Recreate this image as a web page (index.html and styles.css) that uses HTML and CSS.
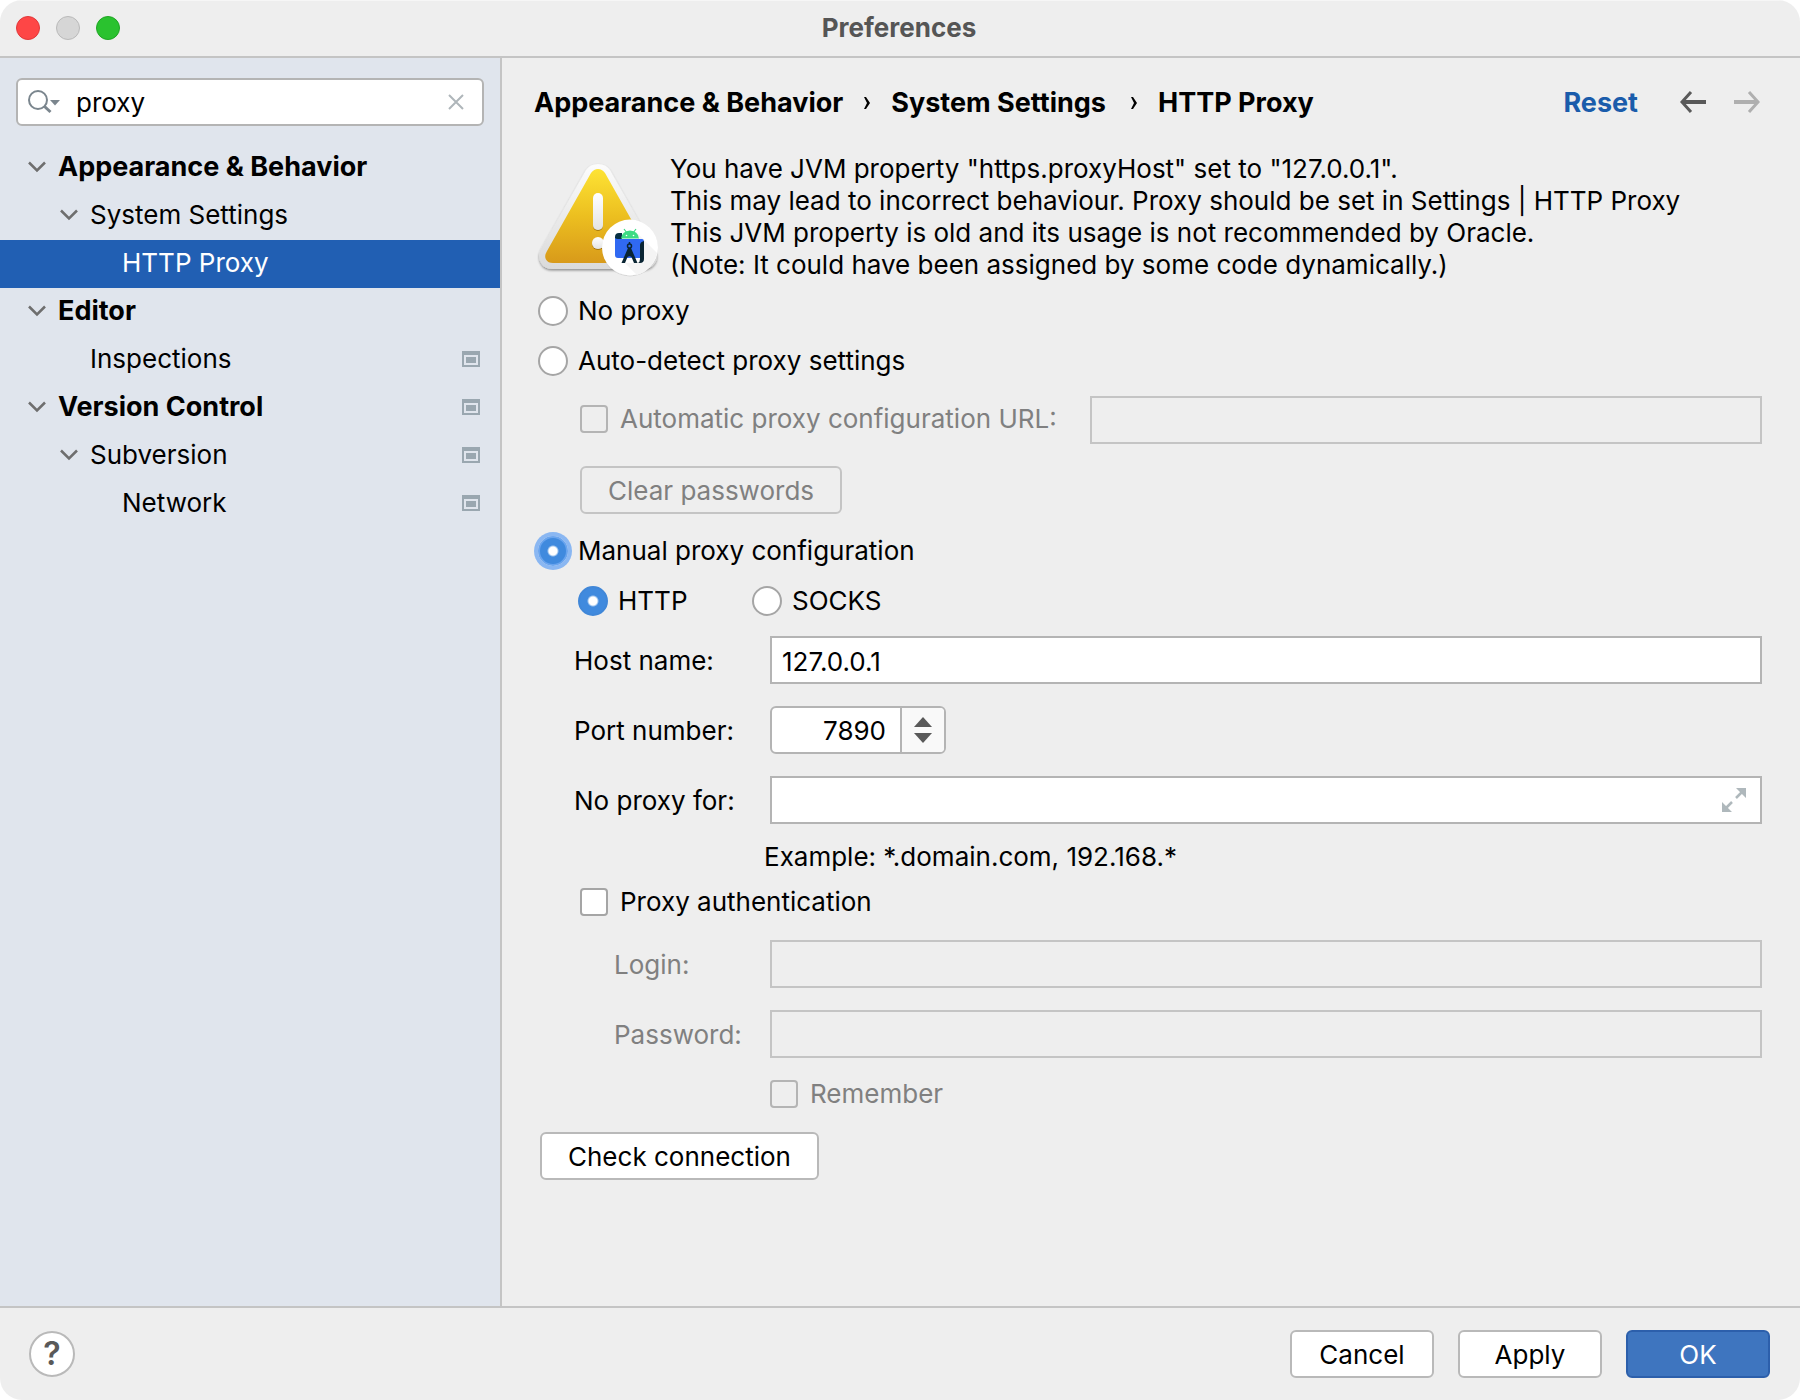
FILE: index.html
```html
<!DOCTYPE html>
<html lang="en">
<head>
<meta charset="utf-8">
<title>Preferences</title>
<link rel="stylesheet" href="styles.css">
</head>
<body>
<div class="window">
  <header class="titlebar">
    <div class="lights">
      <button class="light light-close" aria-label="Close"></button>
      <button class="light light-min" aria-label="Minimize" disabled></button>
      <button class="light light-zoom" aria-label="Zoom"></button>
    </div>
    <h1 class="title">Preferences</h1>
  </header>

  <div class="body">
    <nav class="sidebar">
      <div class="search">
        <svg class="search-icon" width="34" height="26" viewBox="0 0 34 26" fill="none">
          <circle cx="10" cy="11" r="9" stroke="#7b868e" stroke-width="2"/>
          <path d="M16 17l6.500 6" stroke="#7b868e" stroke-width="3"/>
          <path d="M22 11h10l-5 5.500z" fill="#7b868e"/>
        </svg>
        <input class="search-input" type="text" value="proxy" aria-label="Search settings">
        <button class="clear" aria-label="Clear search">
          <svg width="16" height="16" viewBox="0 0 16 16"><path d="M1 1l14 14M15 1L1 15" stroke="#afb6ba" stroke-width="2"/></svg>
        </button>
      </div>
      <ul class="tree">
        <li class="node level-1"><svg class="chevron" width="18" height="12" viewBox="0 0 18 12"><path d="M1 1.500l8 8 8-8"/></svg><span class="label">Appearance &amp; Behavior</span></li>
        <li class="node level-2"><svg class="chevron" width="18" height="12" viewBox="0 0 18 12"><path d="M1 1.500l8 8 8-8"/></svg><span class="label">System Settings</span></li>
        <li class="node level-3 selected"><span class="label">HTTP Proxy</span></li>
        <li class="node level-1"><svg class="chevron" width="18" height="12" viewBox="0 0 18 12"><path d="M1 1.500l8 8 8-8"/></svg><span class="label">Editor</span></li>
        <li class="node level-2 leaf"><span class="label">Inspections</span><svg class="scope" width="18" height="16" viewBox="0 0 18 16"><path fill-rule="evenodd" d="M0 0h18v16H0zM2 4v10h14V4z"/><path d="M4 6h10v6H4z"/></svg></li>
        <li class="node level-1"><svg class="chevron" width="18" height="12" viewBox="0 0 18 12"><path d="M1 1.500l8 8 8-8"/></svg><span class="label">Version Control</span><svg class="scope" width="18" height="16" viewBox="0 0 18 16"><path fill-rule="evenodd" d="M0 0h18v16H0zM2 4v10h14V4z"/><path d="M4 6h10v6H4z"/></svg></li>
        <li class="node level-2"><svg class="chevron" width="18" height="12" viewBox="0 0 18 12"><path d="M1 1.500l8 8 8-8"/></svg><span class="label">Subversion</span><svg class="scope" width="18" height="16" viewBox="0 0 18 16"><path fill-rule="evenodd" d="M0 0h18v16H0zM2 4v10h14V4z"/><path d="M4 6h10v6H4z"/></svg></li>
        <li class="node level-3"><span class="label">Network</span><svg class="scope" width="18" height="16" viewBox="0 0 18 16"><path fill-rule="evenodd" d="M0 0h18v16H0zM2 4v10h14V4z"/><path d="M4 6h10v6H4z"/></svg></li>
      </ul>
    </nav>

    <main class="main">
      <div class="toolbar">
        <div class="crumbs">
          <span>Appearance &amp; Behavior</span>
          <svg width="6" height="12" viewBox="0 0 6 12"><path d="M0 0h2l4 6-4 6H0l3-6z"/></svg>
          <span>System Settings</span>
          <svg class="wide" width="6" height="12" viewBox="0 0 6 12"><path d="M0 0h2l4 6-4 6H0l3-6z"/></svg>
          <span>HTTP Proxy</span>
        </div>
        <a class="reset" href="#">Reset</a>
        <button class="nav-button" aria-label="Back">
          <svg width="26" height="22" viewBox="0 0 26 22" fill="none" stroke="#595959" stroke-width="4"><path d="M26 11H3"/><path stroke-width="3" d="M11 1L2 11l9 10"/></svg>
        </button>
        <button class="nav-button" aria-label="Forward" disabled>
          <svg width="26" height="22" viewBox="0 0 26 22" fill="none" stroke="#afafaf" stroke-width="4"><path d="M0 11h23"/><path stroke-width="3" d="M15 1l9 10-9 10"/></svg>
        </button>
      </div>

      <div class="alert">
        <svg class="alert-icon" width="132" height="128" viewBox="4 -2 132 128">
          <defs>
            <linearGradient id="amber" x1="0" y1="0" x2="0" y2="1"><stop offset="0" stop-color="#fde334"/><stop offset=".5" stop-color="#ecbf20"/><stop offset="1" stop-color="#d89a1a"/></linearGradient>
            <linearGradient id="rim" x1="0" y1="0" x2="0" y2="1"><stop offset="0" stop-color="#fcfcfc"/><stop offset="1" stop-color="#dadada"/></linearGradient>
            <linearGradient id="mark" x1="0" y1="0" x2="0" y2="1"><stop offset="0" stop-color="#fff"/><stop offset="1" stop-color="#e4e4e2"/></linearGradient>
            <filter id="drop" x="-20%" y="-20%" width="140%" height="140%"><feDropShadow dx="0" dy="1.500" stdDeviation="1.200" flood-opacity=".4"/></filter>
            <filter id="faint" x="-20%" y="-20%" width="140%" height="140%"><feDropShadow dx="0" dy=".5" stdDeviation=".5" flood-opacity=".2"/></filter>
            <filter id="soft" x="-50%" y="-20%" width="200%" height="140%"><feDropShadow dx="0" dy="1" stdDeviation=".6" flood-color="#7a5200" flood-opacity=".6"/></filter>
          </defs>
          <path filter="url(#drop)" fill="url(#rim)" d="M56 15Q60 9 68 9t12 6l45 79q4 8 0 14-4 6-12 6H23q-9 0-12-6-4-7 0-14z"/>
          <path fill="url(#amber)" d="M61 18q3-4 7-4t7 4l44 78q3 5 1 8.500t-7 3.500H23q-5 0-7-3.500t1-8.500z"/>
          <g filter="url(#soft)"><rect x="63" y="38" width="10" height="37" rx="5" fill="url(#mark)"/><circle cx="68" cy="88" r="6" fill="url(#mark)"/></g>
          <circle cx="100" cy="92.500" r="28" fill="#fff" filter="url(#faint)"/>
          <path fill="#f4f4f4" d="M107 78l20 20q-4 17-20 22l-12-12h19z"/>
          <path fill="#073042" d="M92 78h-3q-4 0-4 4v3q1 2 3 0h4z"/>
          <path fill="#3069f2" d="M88 84h24q2 0 2 3v13q0 3-3 3H88q-3 0-3-3V83q1 1 3 1z"/>
          <path fill="#0a2533" d="M114 86v18q0 4-4 4h-2q2-1 2-4V90q0-3 4-4z"/>
          <path fill="#3ddc84" d="M91 83.500q1-7.500 9-8 8 .5 9 8z"/>
          <path stroke="#3ddc84" stroke-width="1.200" d="M94 74l3 4M106 74l-3 4"/>
          <circle cx="96.500" cy="80.500" r=".8" fill="#fff"/><circle cx="103.500" cy="80.500" r=".8" fill="#fff"/>
          <g fill="none" stroke="#0a2533"><path stroke-width="1.500" d="M99.500 87v2"/><circle cx="99.500" cy="91" r="2" stroke-width="1.500"/></g>
          <path fill="#0a2533" d="M98 93h3l6.500 15h-3.500l-2.500-6q-2-1.500-4 0l-2.500 6H91.500z"/>
        </svg>
        <p class="alert-text">You have JVM property "https.proxyHost" set to "127.0.0.1".<br>This may lead to incorrect behaviour. Proxy should be set in Settings | HTTP Proxy<br>This JVM property is old and its usage is not recommended by Oracle.<br>(Note: It could have been assigned by some code dynamically.)</p>
      </div>

      <form class="form">
        <label class="choice"><input class="radio" type="radio" name="mode">No proxy</label>
        <label class="choice"><input class="radio" type="radio" name="mode">Auto-detect proxy settings</label>
        <div class="field-row">
          <label class="check disabled"><input class="box" type="checkbox" disabled>Automatic proxy configuration URL:</label>
          <input class="text" type="text" aria-label="Automatic proxy configuration URL" disabled>
        </div>
        <button class="button clear-passwords" type="button" disabled>Clear passwords</button>
        <label class="choice"><input class="radio focused" type="radio" name="mode" checked>Manual proxy configuration</label>
        <div class="protocols">
          <label class="choice"><input class="radio" type="radio" name="protocol" checked>HTTP</label>
          <label class="choice"><input class="radio" type="radio" name="protocol">SOCKS</label>
        </div>
        <div class="fields">
          <label for="host">Host name:</label>
          <input id="host" class="text" type="text" value="127.0.0.1">
          <label for="port">Port number:</label>
          <div class="spinner">
            <input id="port" class="spinner-input" type="number" value="7890">
            <div class="spinner-buttons">
              <button type="button" aria-label="Increase"><svg width="18" height="10" viewBox="0 0 18 10"><path d="M9 0l9 10H0z"/></svg></button>
              <button type="button" aria-label="Decrease"><svg width="18" height="10" viewBox="0 0 18 10"><path d="M0 0h18L9 10z"/></svg></button>
            </div>
          </div>
          <label for="bypass">No proxy for:</label>
          <div class="text expandable">
            <input id="bypass" type="text">
            <button type="button" aria-label="Expand"><svg width="24" height="24" viewBox="0 0 24 24"><path fill="#afb8bc" d="M14 0h10v10zM0 14v10h10z"/><path stroke="#afb8bc" stroke-width="2.500" d="M20 4l-6 6M4 20l6-6"/></svg></button>
          </div>
        </div>
        <p class="example">Example: *.domain.com, 192.168.*</p>
        <label class="check auth"><input class="box" type="checkbox">Proxy authentication</label>
        <div class="fields credentials disabled">
          <label for="login">Login:</label>
          <input id="login" class="text" type="text" disabled>
          <label for="password">Password:</label>
          <input id="password" class="text" type="password" disabled>
        </div>
        <label class="check remember disabled"><input class="box" type="checkbox" disabled>Remember</label>
        <button class="button check-connection" type="button">Check connection</button>
      </form>
    </main>
  </div>

  <footer class="footer">
    <button class="help" aria-label="Help">?</button>
    <div class="actions">
      <button class="button">Cancel</button>
      <button class="button">Apply</button>
      <button class="button primary">OK</button>
    </div>
  </footer>
</div>
</body>
</html>
```
FILE: styles.css
```css
* { box-sizing: border-box; }

body {
  margin: 0;
  background: #fff;
  color: #000;
  font: 26px/32px Inter, "Liberation Sans", sans-serif;
}

button, input { font: inherit; color: inherit; margin: 0; }
button { padding: 0; border: 0; background: none; }
p, ul, h1 { margin: 0; padding: 0; }
svg { display: block; flex: none; }

.window {
  display: flex;
  flex-direction: column;
  min-height: 100vh;
  overflow: hidden;
  border-radius: 22px;
  background: #eee;
}

/* Title bar */
.titlebar {
  display: grid;
  grid-template-columns: 1fr auto 1fr;
  align-items: center;
  height: 58px;
  padding: 0 18px 2px 16px;
  border-top: 1px solid #f6f6f6;
  border-bottom: 2px solid #c4c4c4;
}
.lights { display: flex; gap: 16px; }
.light { width: 24px; height: 24px; border-radius: 50%; border: 1px solid; }
.light-close { background: #fe4646; border-color: #e0383a; }
.light-min { background: #d6d6d6; border-color: #b9b9b9; }
.light-zoom { background: #2ac22f; border-color: #1fa524; }
.title { color: #555; font-size: 26px; font-weight: 700; line-height: 32px; }

.body { display: flex; flex: 1; }

/* Sidebar */
.sidebar {
  flex: none;
  width: 502px;
  padding-top: 20px;
  border-right: 2px solid #c4c4c4;
  background: #e0e5ed;
}
.search {
  display: flex;
  align-items: center;
  height: 48px;
  margin: 0 16px 18px;
  padding: 0 18px 0 10px;
  border: 2px solid #b4b4b4;
  border-radius: 6px;
  background: #fff;
}
.search-input {
  flex: 1;
  min-width: 0;
  padding: 2px 14px 0;
  border: 0;
  outline: 0;
  background: none;
}
.tree { list-style: none; }
.node {
  display: flex;
  align-items: center;
  height: 48px;
  padding: 0 20px 2px 0;
}
.level-1 { padding-left: 28px; font-size: 27px; font-weight: 700; }
.level-2 { padding-left: 60px; }
.level-3 { padding-left: 122px; }
.leaf { padding-left: 90px; }
.label { flex: 1; }
.chevron { margin-right: 12px; fill: none; stroke: #6e6e6e; stroke-width: 2.500px; }
.scope { fill: #9aa7b0; }
.selected { background: #215fb3; color: #fff; }

/* Main panel */
.main { flex: 1; min-width: 0; padding: 0 38px 0 32px; }
.toolbar {
  display: flex;
  align-items: center;
  height: 90px;
  padding-right: 2px;
  font-size: 27px;
  font-weight: 700;
}
.crumbs { display: flex; flex: 1; align-items: center; gap: 21px; }
.crumbs .wide { margin-left: 4px; }
.reset { margin-right: 42px; color: #1a5cab; text-decoration: none; }
.nav-button { margin-bottom: 2px; }
.nav-button + .nav-button { margin-left: 28px; }

.alert { display: flex; gap: 4px; padding: 5px 0; }

/* Form */
.form { display: flex; flex-direction: column; align-items: flex-start; padding-left: 4px; }
.choice { display: flex; align-items: center; gap: 10px; height: 50px; }
.radio {
  appearance: none;
  flex: none;
  width: 30px;
  height: 30px;
  border: 2px solid #a5a5a5;
  border-radius: 50%;
  background: #fff;
}
.radio:checked {
  border-color: #4087d8;
  background: radial-gradient(circle, #fff 4px, #408ade 6px);
}
.radio.focused { border-color: #69a4ee; box-shadow: 0 0 0 4px #8ab7f2; }
.check { display: flex; align-items: center; gap: 12px; white-space: nowrap; }
.box {
  appearance: none;
  flex: none;
  width: 28px;
  height: 28px;
  border: 2px solid #a5a5a5;
  border-radius: 4px;
  background: #fff;
}
.box:disabled { border-color: #b4b4b4; background: none; }
.disabled { color: #808080; }

.text {
  width: 100%;
  min-width: 0;
  height: 48px;
  padding: 2px 10px 0;
  border: 2px solid #b4b4b4;
  border-radius: 0;
  outline: 0;
  background: #fff;
}
.text:disabled { border-color: #c4c4c4; background: none; }

.field-row {
  display: grid;
  grid-template-columns: 484px 1fr;
  column-gap: 26px;
  align-self: stretch;
  margin: 10px 0 22px 42px;
}
.field-row .check { padding-bottom: 2px; }
.button {
  height: 48px;
  padding: 2px 26px 0;
  border: 2px solid #b9b9b9;
  border-radius: 6px;
  background: #fff;
}
.button:disabled { border-color: #c4c4c4; background: none; color: #808080; }
.clear-passwords { margin: 0 0 12px 42px; }
.protocols { display: grid; grid-template-columns: 174px auto; margin: 0 0 10px 40px; }

.fields {
  display: grid;
  grid-template-columns: 196px 1fr;
  align-self: stretch;
  align-items: center;
  row-gap: 22px;
  padding-left: 36px;
}
.fields label { padding-top: 2px; }
.spinner {
  display: flex;
  width: 176px;
  height: 48px;
  overflow: hidden;
  border: 2px solid #b4b4b4;
  border-radius: 6px;
  background: #fff;
}
.spinner-input {
  appearance: textfield;
  flex: 1;
  min-width: 0;
  padding: 2px 14px 0;
  border: 0;
  outline: 0;
  background: none;
  text-align: right;
}
.spinner-input::-webkit-inner-spin-button { appearance: none; margin: 0; }
.spinner-buttons {
  display: flex;
  flex-direction: column;
  align-items: center;
  justify-content: center;
  gap: 6px;
  width: 44px;
  border-left: 2px solid #b4b4b4;
  background: #f9f9f9;
  fill: #595959;
}
.expandable { display: flex; align-items: center; padding: 0 14px 0 10px; }
.expandable input { flex: 1; min-width: 0; padding: 0; border: 0; outline: 0; background: none; }

.example { margin: 17px 0 13px 226px; }
.auth { margin-left: 42px; }
.credentials { grid-template-columns: 156px 1fr; margin-top: 22px; padding-left: 76px; }
.remember { margin: 20px 0 22px 232px; }
.check-connection { margin-left: 2px; }

/* Footer */
.footer {
  display: flex;
  align-items: center;
  justify-content: space-between;
  height: 94px;
  padding: 0 30px 0 29px;
  border-top: 2px solid #c4c4c4;
}
.help {
  width: 46px;
  height: 46px;
  border: 2px solid #b9b9b9;
  border-radius: 50%;
  background: #fff;
  color: #595959;
  font-size: 32px;
  font-weight: 600;
}
.actions { display: flex; gap: 24px; }
.actions .button { width: 144px; }
.primary { border-color: #2c5fab; background: #3e75bf; color: #fff; }
```
